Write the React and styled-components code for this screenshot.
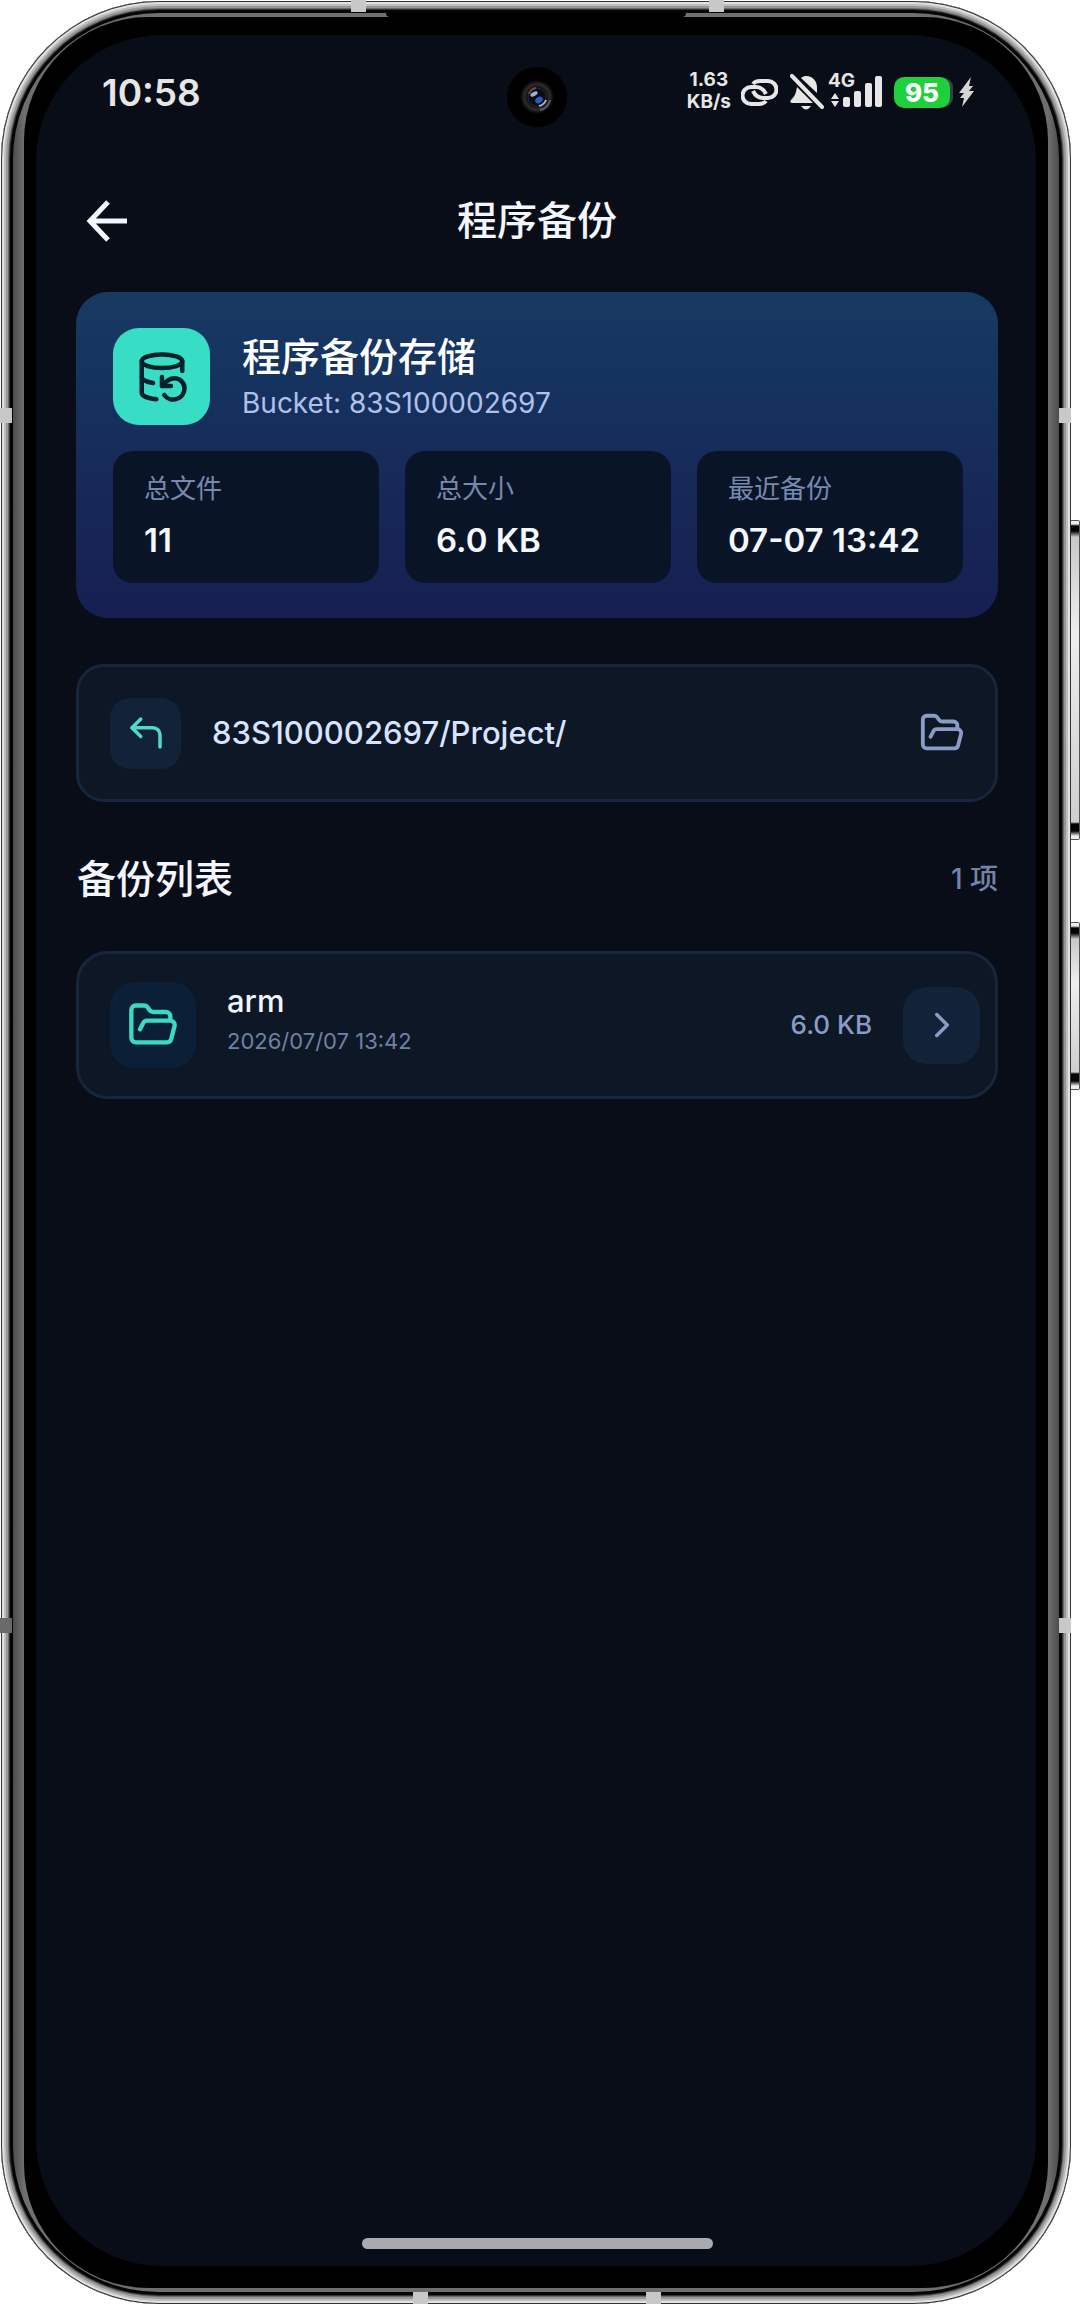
import React from 'react';
import styled, { createGlobalStyle } from 'styled-components';
import { ChevronRight, CornerUpLeft, DatabaseBackup, FolderOpen } from 'lucide-react';

const GlobalStyle = createGlobalStyle`
  * {
    box-sizing: border-box;
  }
  body {
    margin: 0;
    background: #fff;
    font-family: Inter, 'Noto Sans CJK SC', sans-serif;
  }
  h1, h2, p, ul, dl, dd {
    margin: 0;
    padding: 0;
  }
  button {
    border: none;
    padding: 0;
    font: inherit;
    cursor: pointer;
  }
`;

// Phone shell
const Page = styled.div`
  display: flex;
  min-height: 100vh;
  padding: 1px 9px 1px 1px;
`;

const Phone = styled.div`
  position: relative;
  display: flex;
  flex: 1;
  padding: 12px;
  border-radius: 158px;
  background: #050505;
  box-shadow:
    inset 0 0 0 1px #333,
    inset 0 0 0 3px #e2e2e2,
    inset 0 0 0 5px #bdbdbd,
    inset 0 0 0 7px #979797,
    inset 0 0 0 8px #6b6b6b,
    inset 0 0 0 9px #333;
`;

const Glass = styled.div`
  display: flex;
  flex: 1;
  padding: 4px 11px;
  border-radius: 146px;
  background: linear-gradient(90deg, #4c4c4c, #6f6f6f 11px, #6f6f6f calc(100% - 11px), #4c4c4c);
`;

const Bezel = styled.div`
  display: flex;
  flex: 1;
  padding: 18px 12px 22px;
  border-radius: 124px;
  background: #000;
`;

const Screen = styled.main`
  position: relative;
  display: flex;
  flex: 1;
  flex-direction: column;
  padding: 0 38px 17px 40px;
  border-radius: 126px;
  background: #080d17;
`;

const Speaker = styled.span`
  position: absolute;
  top: 12px;
  left: 50%;
  width: 300px;
  height: 4px;
  margin-left: -150px;
  border-radius: 0 0 4px 4px;
  background: #000;
`;

const Antenna = styled.span`
  position: absolute;
  width: ${(p) => (p.$side ? 12 : 15)}px;
  height: ${(p) => (p.$side ? 15 : 12)}px;
  top: ${(p) => p.$top};
  right: ${(p) => p.$right};
  bottom: ${(p) => p.$bottom};
  left: ${(p) => p.$left};
  background: ${(p) => (p.$dark ? '#6a6a6a' : '#c8c8c8')};
`;

const SideKey = styled.span`
  position: absolute;
  left: 100%;
  top: ${(p) => p.$top}px;
  width: 9px;
  height: ${(p) => p.$height}px;
  border: 1px solid #555;
  border-left-width: 0;
  border-radius: 0 2px 2px 0;
  background: linear-gradient(
    #eee 3px, #000 5px, #000 10px, #c8c8c8 16px, #ededed 35%,
    #cfcfcf calc(100% - 17px), #000 calc(100% - 15px), #000 calc(100% - 8px), #eee calc(100% - 3px)
  );
`;

const Camera = styled.svg`
  position: absolute;
  top: 32px;
  left: 50%;
  width: 60px;
  height: 60px;
  margin-left: -29px;
`;

// Status bar
const StatusBar = styled.div`
  display: flex;
  align-items: center;
  justify-content: space-between;
  height: 115px;
  padding: 0 24px 0 26px;
  color: #e6e6e6;
`;

const Clock = styled.time`
  font-size: 37px;
  font-weight: 600;
  line-height: 40px;
`;

const StatusIcons = styled.div`
  display: flex;
  align-items: center;
`;

const NetSpeed = styled.div`
  margin-right: 10px;
  padding-bottom: 4px;
  font-size: 19px;
  font-weight: 700;
  line-height: 22px;
  text-align: center;
`;

const StatusGlyph = styled.svg`
  height: 38px;
  width: ${(p) => p.$width}px;
  margin-right: ${(p) => p.$gap}px;
  flex: none;
`;

const Signal = styled.div`
  display: grid;
  grid-template-columns: 12px auto;
  width: 54px;
  height: 38px;
  margin-right: 12px;
`;

const Network = styled.span`
  grid-area: 1 / 1;
  font-size: 19px;
  font-weight: 700;
  line-height: 14px;
`;

const SignalBars = styled.svg`
  grid-area: 1 / 1 / 2 / 3;
  width: 54px;
  height: 38px;
`;

const Battery = styled.div`
  width: 56px;
  margin-right: 9px;
  border-radius: 10px;
  background: #20cf3c;
  box-shadow: 4px 0 0 -1px #3a3f48;
  color: #fff;
  font-size: 26px;
  font-weight: 800;
  line-height: 31px;
  text-align: center;
`;

// App bar
const AppBar = styled.header`
  display: grid;
  grid-template-columns: 64px 1fr 64px;
  align-items: center;
  height: 142px;
`;

const BackButton = styled.button`
  display: flex;
  justify-content: center;
  align-items: center;
  width: 62px;
  height: 64px;
  background: none;
`;

const Title = styled.h1`
  color: #f3f6ff;
  font-size: 40px;
  font-weight: 500;
  line-height: 48px;
  text-align: center;
`;

// Summary card
const Summary = styled.section`
  padding: 36px 35px 35px 37px;
  border-radius: 32px;
  background: linear-gradient(#173a62, #15325f 30%, #172a59 55%, #171f52);
`;

const SummaryHead = styled.div`
  display: flex;
  align-items: center;
  gap: 32px;
  margin-bottom: 26px;
`;

const IconTile = styled.div`
  display: flex;
  justify-content: center;
  align-items: center;
  flex: none;
  width: ${(p) => p.$size}px;
  height: ${(p) => p.$size}px;
  border-radius: ${(p) => p.$radius}px;
  background: ${(p) => p.$bg};
  color: ${(p) => p.$color};
`;

const SummaryText = styled.div`
  padding-top: 4px;
`;

const SummaryTitle = styled.h2`
  color: #fff;
  font-size: 39px;
  font-weight: 500;
  line-height: 48px;
`;

const Bucket = styled.p`
  color: #b0c0ea;
  font-size: 28px;
  line-height: 44px;
`;

const Stats = styled.dl`
  display: grid;
  grid-template-columns: repeat(3, 1fr);
  gap: 26px;
`;

const Stat = styled.div`
  height: 132px;
  padding: 20px 0 0 31px;
  border-radius: 20px;
  background: #091527;
`;

const StatLabel = styled.dt`
  color: #7889b0;
  font-size: 26px;
  line-height: 36px;
`;

const StatValue = styled.dd`
  margin-top: 11px;
  color: #f5f8ff;
  font-size: 33px;
  font-weight: 600;
  line-height: 44px;
  white-space: nowrap;
`;

// Current path
const PathCard = styled.nav`
  display: flex;
  align-items: center;
  gap: 31px;
  height: 138px;
  margin-top: 46px;
  padding: 0 30px 0 31px;
  border: 3px solid #17263c;
  border-radius: 28px;
  background: #0d1725;
`;

const PathText = styled.span`
  flex: 1;
  color: #d8e4ff;
  font-size: 31px;
  font-weight: 500;
  line-height: 40px;
`;

// Backup list
const ListHeader = styled.div`
  display: flex;
  align-items: center;
  justify-content: space-between;
  height: 149px;
  padding: 4px 0 0 1px;
`;

const ListTitle = styled.h2`
  color: #f3f6ff;
  font-size: 39px;
  font-weight: 500;
  line-height: 48px;
`;

const Count = styled.span`
  color: #7384aa;
  font-size: 28px;
  font-weight: 500;
  line-height: 36px;
`;

const List = styled.ul`
  flex: 1;
  list-style: none;
`;

const Item = styled.li`
  display: flex;
  align-items: center;
  gap: 31px;
  height: 148px;
  padding: 0 15px 0 31px;
  border: 3px solid #17263c;
  border-radius: 32px;
  background: #0d1725;
`;

const ItemBody = styled.div`
  flex: 1;
`;

const ItemName = styled.p`
  color: #f3f6ff;
  font-size: 31px;
  font-weight: 500;
  line-height: 40px;
`;

const ItemDate = styled.p`
  margin-bottom: 8px;
  color: #7081a6;
  font-size: 22px;
  line-height: 40px;
`;

const ItemSize = styled.span`
  color: #8a9cc5;
  font-size: 26px;
  font-weight: 500;
  line-height: 36px;
`;

const HomeIndicator = styled.div`
  align-self: center;
  width: 351px;
  height: 11px;
  border-radius: 6px;
  background: #a9a9b0;
`;

const stats = [
  { label: '总文件', value: '11' },
  { label: '总大小', value: '6.0 KB' },
  { label: '最近备份', value: '07-07 13:42' },
];

const backups = [{ name: 'arm', date: '2026/07/07 13:42', size: '6.0 KB' }];

function App() {
  return (
    <Page lang="zh-CN">
      <GlobalStyle />
      <Phone>
        <Antenna $top="-1px" $left="350px" />
        <Antenna $top="-1px" $right="347px" />
        <Antenna $side $top="407px" $left="-1px" />
        <Antenna $side $top="407px" $right="0" />
        <Antenna $side $dark $top="1617px" $left="-1px" />
        <Antenna $side $top="1617px" $right="0" />
        <Antenna $bottom="0" $left="412px" />
        <Antenna $bottom="0" $right="410px" />
        <SideKey $top={519} $height={320} />
        <SideKey $top={921} $height={168} />
        <Glass>
          <Bezel>
            <Screen>
              <Camera viewBox="0 0 60 60" fill="none">
                <defs>
                  <radialGradient id="lens">
                    <stop offset="0.5" stopColor="#08080c" />
                    <stop offset="0.75" stopColor="#2c2c2e" />
                    <stop offset="1" stopColor="#000" />
                  </radialGradient>
                </defs>
                <circle cx="30" cy="30" r="30" fill="#000" />
                <circle cx="30" cy="30" r="17" fill="url(#lens)" />
                <circle cx="30" cy="30" r="9" fill="#090b18" stroke="#2b2630" />
                <path d="M22 27A9 9 0 0 1 29 21" stroke="#7a4540" strokeWidth="2" />
                <path d="M39 33A10 10 0 0 1 32 39" stroke="#a9b3cc" strokeWidth="2" />
                <path d="M43 33A13 13 0 0 1 33 43" stroke="#55565a" strokeWidth="2" />
                <ellipse cx="27" cy="27" rx="4" ry="2" transform="rotate(-30 27 27)" fill="#9fb2dc" />
                <ellipse cx="32" cy="33" rx="4" ry="3" transform="rotate(-30 32 33)" fill="#2f5cc0" />
              </Camera>

              <StatusBar>
                <Clock>10:58</Clock>
                <StatusIcons>
                  <NetSpeed>
                    1.63
                    <br />
                    KB/s
                  </NetSpeed>
                  <StatusGlyph $width={37} $gap={12} viewBox="0 -2 37 38" fill="none" stroke="#e6e6e6" strokeWidth="4">
                    <path d="M12 8C14 5 17 5 19 5H27A8.500 8.500 0 0 1 27 22H22C17 22 14 19 12 15" />
                    <path d="M25 25C23 28 20 28 18 28H10A8.500 8.500 0 0 1 10 11H15C20 11 23 14 25 18" />
                  </StatusGlyph>
                  <StatusGlyph $width={34} $gap={4} viewBox="0 1 34 38" fill="#e6e6e6">
                    <path d="M11 5C17 0 27 5 27 14V20ZM7 14L23 30H2C0 30 0 28 1 27C5 23 6 20 7 14Z" />
                    <path d="M11 33H21Q16 40 11 33Z" />
                    <path d="M2 3L32 34" stroke="#e6e6e6" strokeWidth="4" strokeLinecap="round" />
                  </StatusGlyph>
                  <Signal>
                    <Network>4G</Network>
                    <SignalBars viewBox="0 4 54 38" fill="#e6e6e6">
                      <path d="M7 23L11 29H3ZM3 31H11L7 37Z" />
                      <rect x="15" y="27" width="7" height="10" rx="2" />
                      <rect x="26" y="21" width="7" height="16" rx="2" />
                      <rect x="37" y="13" width="7" height="24" rx="2" />
                      <rect x="47" y="6" width="7" height="31" rx="2" />
                    </SignalBars>
                  </Signal>
                  <Battery>95</Battery>
                  <StatusGlyph $width={15} $gap={0} viewBox="0 0 15 38" fill="#d6d6d6">
                    <path d="M12 3L0 19H5L1 24H5L3 33L15 17H10L14 12H10Z" />
                  </StatusGlyph>
                </StatusIcons>
              </StatusBar>

              <AppBar>
                <BackButton aria-label="返回">
                  <svg width="42" height="42" viewBox="0 0 42 42" fill="none" stroke="#f3f6ff" strokeWidth="5">
                    <path d="M41 21H5M22 2L4 21L22 40" />
                  </svg>
                </BackButton>
                <Title>程序备份</Title>
              </AppBar>

              <Summary>
                <SummaryHead>
                  <IconTile $size={97} $radius={26} $bg="#37dec5" $color="#06212b">
                    <DatabaseBackup size={54} />
                  </IconTile>
                  <SummaryText>
                    <SummaryTitle>程序备份存储</SummaryTitle>
                    <Bucket>Bucket: 83S100002697</Bucket>
                  </SummaryText>
                </SummaryHead>
                <Stats>
                  {stats.map((stat) => (
                    <Stat key={stat.label}>
                      <StatLabel>{stat.label}</StatLabel>
                      <StatValue>{stat.value}</StatValue>
                    </Stat>
                  ))}
                </Stats>
              </Summary>

              <PathCard>
                <IconTile as="button" aria-label="上一级" $size={71} $radius={20} $bg="#122238" $color="#52d9c3">
                  <CornerUpLeft size={42} />
                </IconTile>
                <PathText>83S100002697/Project/</PathText>
                <FolderOpen size={46} color="#8a9cc5" />
              </PathCard>

              <ListHeader>
                <ListTitle>备份列表</ListTitle>
                <Count>1 项</Count>
              </ListHeader>

              <List>
                {backups.map((item) => (
                  <Item key={item.name}>
                    <IconTile $size={86} $radius={24} $bg="#0b1f37" $color="#3bd9c2">
                      <FolderOpen size={52} />
                    </IconTile>
                    <ItemBody>
                      <ItemName>{item.name}</ItemName>
                      <ItemDate>{item.date}</ItemDate>
                    </ItemBody>
                    <ItemSize>{item.size}</ItemSize>
                    <IconTile as="button" aria-label="打开" $size={77} $radius={24} $bg="#122238" $color="#8a9cc5">
                      <ChevronRight size={42} />
                    </IconTile>
                  </Item>
                ))}
              </List>

              <HomeIndicator />
            </Screen>
          </Bezel>
        </Glass>
        <Speaker />
      </Phone>
    </Page>
  );
}

export default App;
